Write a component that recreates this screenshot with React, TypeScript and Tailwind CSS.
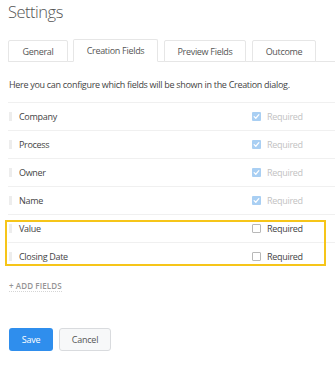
import React from "react";

const rows = [
  { label: "Company", checked: true, locked: true },
  { label: "Process", checked: true, locked: true },
  { label: "Owner", checked: true, locked: true },
  { label: "Name", checked: true, locked: true },
  { label: "Value", checked: false, locked: false },
  { label: "Closing Date", checked: false, locked: false },
];

function Check({ checked }: { checked: boolean }) {
  if (checked) {
    return (
      <span className="flex h-[9px] w-[9px] items-center justify-center rounded-[1px] bg-[#a9cff3]">
        <svg width="7" height="7" viewBox="0 0 8 8" fill="none">
          <path d="M1.3 4.2 L3.2 6 L6.7 1.9" stroke="#fff" strokeWidth="1.4" strokeLinecap="round" strokeLinejoin="round" />
        </svg>
      </span>
    );
  }
  return <span className="block h-[9px] w-[9px] rounded-[1px] border border-[#b8b8b8] bg-white" />;
}

export default function App() {
  const tabs = [
    { name: "General", w: "w-[60px]", active: false },
    { name: "Creation Fields", w: "w-[85px]", active: true },
    { name: "Preview Fields", w: "w-[82px]", active: false },
    { name: "Outcome", w: "w-[64px]", active: false },
  ];
  return (
    <div
      className="relative h-[368px] w-[335px] overflow-hidden bg-white leading-none text-[#444]"
      style={{ fontFamily: '"Open Sans", "Liberation Sans", sans-serif' }}
    >
      <div className="h-[39px] pl-[8px] pt-[1px]">
        <h1 className="text-[16.5px] font-light leading-[22px] tracking-[-0.5px] text-[#555]">Settings</h1>
      </div>

      <div className="ml-[8px] flex h-[23px] items-end gap-[5px] border-b border-[#e6e6e6]">
        {tabs.map((t, i) => (
          <div
            key={t.name}
            className={`-mb-px flex items-center justify-center rounded-t-[2px] border border-[#e6e6e6] text-[9px] tracking-[-0.3px] text-[#555] ${t.w} ${
              t.active ? "h-[23px] border-b-white bg-white" : "h-[22px] bg-white"
            } ${i >= 2 ? "ml-[1px]" : ""}`}
          >
            {t.name}
          </div>
        ))}
      </div>

      <div className="h-[40px] pl-[9px] pt-[17px] text-[9px] leading-[12px] tracking-[-0.3px] text-[#444]">
        Here you can configure which fields will be shown in the Creation dialog.
      </div>

      <div className="ml-[8px]">
        {rows.map((r) => (
          <div key={r.label} className="flex h-[28px] items-center border-t border-[#f0f0f0]">
            <span className="ml-[1px] block h-[9px] w-[3px] bg-[#ededed]" />
            <span className="ml-[7px] flex-1 text-[9px] tracking-[-0.3px] text-[#444]">{r.label}</span>
            <div className="flex w-[83px] items-center gap-[6px]">
              <Check checked={r.checked} />
              <span className={`text-[9px] tracking-[-0.3px] ${r.locked ? "text-[#c2c2c2]" : "text-[#444]"}`}>
                Required
              </span>
            </div>
          </div>
        ))}
      </div>

      <div className="flex h-[22px] items-end pl-[9px]">
        <span className="block border-b border-dotted border-[#d5d5d5] text-[8px] font-semibold uppercase leading-[10px] tracking-[0.1px] text-[#959595]">
          + Add Fields
        </span>
      </div>

      <div className="ml-[9px] mt-[36px] flex gap-[6px]">
        <button className="h-[23px] w-[44px] rounded-[3px] bg-[#2f8eed] text-[9px] tracking-[-0.2px] text-white">Save</button>
        <button className="h-[23px] w-[52px] rounded-[3px] border border-[#d9dbde] bg-[#f7f8f9] text-[9px] tracking-[-0.2px] text-[#555]">
          Cancel
        </button>
      </div>

      <div className="pointer-events-none absolute left-[5px] top-[220px] h-[46px] w-[321px] border-2 border-[#f6c519]" />
    </div>
  );
}
